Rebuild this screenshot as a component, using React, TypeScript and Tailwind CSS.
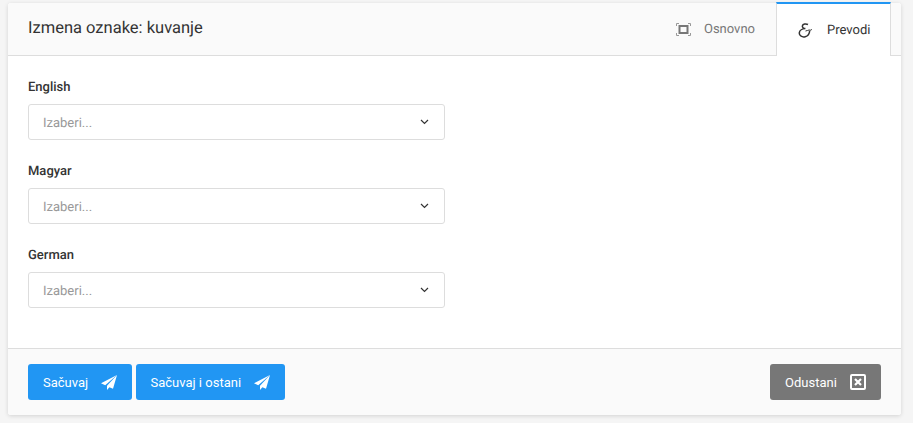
import React from "react";

function Plane() {
  return (
    <svg width="16" height="15" viewBox="0 0 16 15" className="shrink-0" fill="#fff">
      <path d="M16 0 0 8.300l4.200 1.900z" />
      <path d="M16 0 6 10.800V15l2.400-2.800 3.600 1.600z" />
    </svg>
  );
}

function Field({ label }: { label: string }) {
  return (
    <div className="mb-5">
      <div className="h-[22px] text-[13px] font-medium leading-[24px] text-[#333]">{label}</div>
      <div className="mt-[6px] flex h-9 w-[417px] items-center justify-between rounded-[3px] border border-[#ddd] bg-white pl-[14px] pr-[15px]">
        <span className="pt-[3px] text-[13px] text-[#999]">Izaberi...</span>
        <svg width="9" height="6" viewBox="0 0 9 6" fill="none" stroke="#333" strokeWidth="1.2">
          <path d="M1 1l3.500 3.500L8 1" />
        </svg>
      </div>
    </div>
  );
}

export default function App() {
  return (
    <div className="h-[423px] w-[913px] overflow-hidden bg-[#f5f5f5] px-2 pt-[3px] font-['Roboto',sans-serif] [text-rendering:geometricPrecision]">
      <div className="flex h-[412px] w-[893px] flex-col rounded-[3px] bg-white shadow-[0_1px_4px_rgba(0,0,0,0.14)]">
        <header className="flex h-[53px] shrink-0 items-stretch rounded-t-[3px] border-b border-[#ddd] bg-[#fafafa]">
          <h1 className="flex flex-1 items-center pl-5 text-[16.5px] text-[#333]">Izmena oznake: kuvanje</h1>
          <div className="flex items-center gap-[13px] pr-[21px] text-[13px] text-[#777]">
            <svg width="15" height="13" viewBox="0 0 15 13" fill="none" stroke="#777" className="ml-[1px]">
              <rect x="3.500" y="3" width="8" height="7" strokeWidth="2" />
              <path d="M.5 3V.5H3M12 .5h2.500V3M.5 10v2.500H3M12 12.500h2.500V10" strokeWidth="1" stroke="#999" />
            </svg>
            <span className="pt-[2px]">Osnovno</span>
          </div>
          <div className="relative z-10 mb-[-1px] mt-[-1px] flex w-[115px] items-center gap-[14px] border-x border-t-2 border-x-[#ddd] border-t-[#2196f3] bg-white pl-[21px] text-[13px] text-[#333]">
            <svg width="15" height="15" viewBox="0 0 15 15" fill="none" stroke="#333" strokeWidth="1.500" className="shrink-0">
              <path d="M10 1.500C8 .4 4.800.8 4.400 2.800c-.3 1.600 1 2.700 3 2.800-3 .1-5.900 1.700-6.100 4.300-.2 3 3 4.600 5.900 3.800 3-.8 4.300-3.500 4.500-6" />
              <path d="M7.500 8c1.600 0 2.400-1 3.600-1 .9 0 1.300.4 1.900.2.500-.2.700-.6.500-1" strokeWidth="1" />
            </svg>
            <span className="pt-[2px]">Prevodi</span>
          </div>
          <div className="w-[10px]" />
        </header>
        <main className="flex-1 px-5 pt-[20px]">
          <Field label="English" />
          <Field label="Magyar" />
          <Field label="German" />
        </main>
        <footer className="flex h-[67px] shrink-0 items-start justify-between rounded-b-[3px] border-t border-[#ddd] bg-[#fafafa] px-5 pt-[15px]">
          <div className="flex gap-1">
            <button className="flex h-9 w-[104px] items-center gap-[13px] rounded-[3px] bg-[#2196f3] pl-[15px] text-[13px] text-white">
              <span className="pt-[2px]">Sačuvaj</span>
              <Plane />
            </button>
            <button className="flex h-9 w-[149px] items-center gap-[13px] rounded-[3px] bg-[#2196f3] pl-[14.5px] text-[13px] text-white">
              <span className="pt-[2px]">Sačuvaj i ostani</span>
              <Plane />
            </button>
          </div>
          <button className="flex h-9 w-[111px] items-center gap-[13px] rounded-[3px] bg-[#777] pl-[15px] text-[13px] text-white">
            <span className="pt-[2px]">Odustani</span>
            <svg width="16" height="16" viewBox="0 0 16 16" fill="none" stroke="#fff">
              <rect x="1" y="1" width="14" height="14" rx="1" strokeWidth="2" />
              <path d="M5 5l6 6M11 5l-6 6" strokeWidth="2.200" />
            </svg>
          </button>
        </footer>
      </div>
    </div>
  );
}
